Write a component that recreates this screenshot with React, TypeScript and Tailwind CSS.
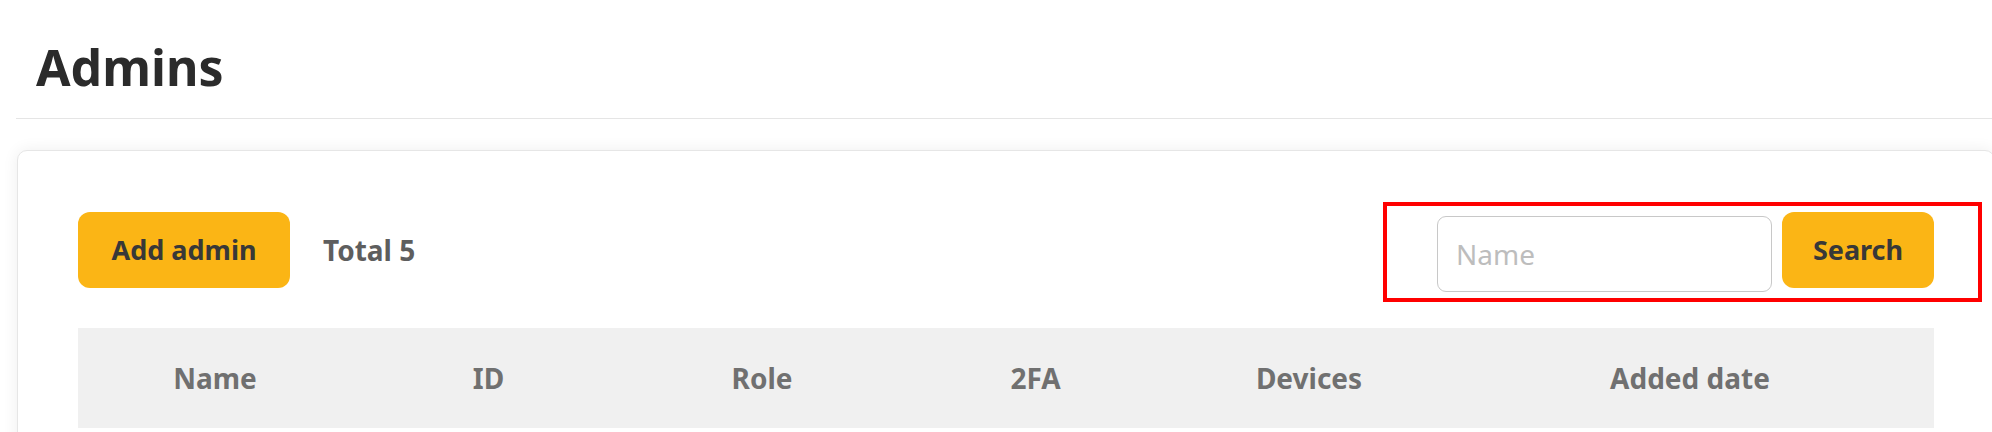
import React from 'react'

const columns = ['Name', 'ID', 'Role', '2FA', 'Devices', 'Added date']

export default function App() {
  return (
    <div
      className="relative w-[1992px] h-[432px] overflow-hidden bg-white"
      style={{ fontFamily: '"Noto Sans", "Liberation Sans", sans-serif' }}
    >
      {/* Page title */}
      <div className="ml-[16px] w-[1980px] h-[119px] border-b border-[#e5e5e5] pl-[20px] pt-[42px]">
        <h1 className="text-[50px] leading-[50px] font-bold text-[#2b2b2b]">Admins</h1>
      </div>

      {/* Card */}
      <div className="mt-[31px] ml-[17px] w-[1978px] h-[400px] rounded-[10px] border border-[#e6e6e6] bg-white shadow-[0_0_16px_rgba(0,0,0,0.07)] pt-[61px] px-[60px]">
        <div className="flex items-start justify-between">
          <div className="flex items-center gap-[33px]">
            <button className="h-[76px] w-[212px] rounded-[12px] bg-[#fbb515] text-[27px] font-bold text-[#383838]">
              Add admin
            </button>
            <span className="text-[28px] font-bold text-[#5e5e5e]">Total 5</span>
          </div>
          <div className="flex items-start gap-[10px]">
            <input
              placeholder="Name"
              className="mt-[4px] w-[335px] h-[76px] rounded-[9px] border border-[#c8c8c8] px-[18px] text-[28px] text-[#333] placeholder:text-[#bdbdbd] outline-none"
            />
            <button className="h-[76px] w-[152px] rounded-[12px] bg-[#fbb515] text-[27px] font-bold text-[#383838]">
              Search
            </button>
          </div>
        </div>

        <div className="mt-[36px] grid grid-cols-[274px_273px_274px_273px_274px_1fr] h-[100px] bg-[#f0f0f0]">
          {columns.map(col => (
            <div key={col} className="flex items-center justify-center text-[28px] font-bold text-[#707070]">
              {col}
            </div>
          ))}
        </div>
      </div>

      {/* Annotation highlight */}
      <div className="absolute left-[1383px] top-[202px] w-[599px] h-[100px] border-[4px] border-[#ff0000] pointer-events-none" />
    </div>
  )
}
